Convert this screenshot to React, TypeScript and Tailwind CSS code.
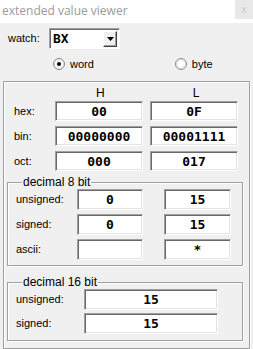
const label = "font-['Liberation_Sans',Arial,sans-serif] text-[11px] text-black leading-none"
const field =
  "bg-white border border-t-[#a0a0a0] border-l-[#a0a0a0] border-r-white border-b-white shadow-[inset_1px_1px_0_#696969,inset_-1px_-1px_0_#e3e3e3] flex items-center justify-center font-['DejaVu_Sans_Mono',monospace] font-bold text-[13px] leading-none text-black"
const group =
  "relative border border-[#a0a0a0] shadow-[inset_1px_1px_0_#ffffff,1px_1px_0_#ffffff]"

function Radio({ checked }: { checked?: boolean }) {
  return (
    <svg width="12" height="12" viewBox="0 0 12 12">
      <circle cx="6" cy="6" r="5.5" fill="#fff" stroke="#8a8a8a" />
      <circle cx="6" cy="6" r="4.5" fill="#fff" stroke="#d4d4d4" />
      {checked && <circle cx="6" cy="6" r="2" fill="#000" />}
    </svg>
  )
}

function GroupTitle({ text }: { text: string }) {
  return (
    <span className={`${label} absolute left-[14px] -top-[7px] bg-[#f0f0f0] px-[1px] text-[12px]`}>
      {text}
    </span>
  )
}

export default function App() {
  return (
    <div className="w-[253px] h-[349px] bg-[#f0f0f0] flex flex-col overflow-hidden">
      {/* title bar */}
      <div className="h-[23px] bg-white flex items-start justify-between shrink-0">
        <span className="pl-[2px] pt-[3px] font-['Open_Sans','Noto_Sans',sans-serif] text-[12px] leading-[16px] text-[#9a9a9a]">
          extended value viewer
        </span>
        <div className="w-[18px] h-[19px] bg-[#e8e8e8] flex items-center justify-center font-['Liberation_Sans',sans-serif] text-[10px] text-[#c8c8c8]">
          x
        </div>
      </div>

      {/* watch */}
      <div className="flex items-center h-[21px] mt-[5px] pl-[8px]">
        <span className={`${label} w-[41px]`}>watch:</span>
        <div className="w-[71px] h-[21px] bg-white border border-t-[#a0a0a0] border-l-[#a0a0a0] border-r-white border-b-white shadow-[inset_1px_1px_0_#696969] flex items-center justify-between pl-[3px] pr-[2px]">
          <span className="font-['DejaVu_Sans_Mono',monospace] font-bold text-[13px] leading-none">BX</span>
          <div className="w-[14px] h-[16px] bg-[#f0f0f0] border border-t-white border-l-white border-r-[#404040] border-b-[#404040] shadow-[inset_-1px_-1px_0_#a0a0a0] flex items-center justify-center">
            <svg width="7" height="4" viewBox="0 0 7 4">
              <path d="M0 0h7L3.5 4z" fill="#000" />
            </svg>
          </div>
        </div>
      </div>

      {/* radio */}
      <div className="flex items-center h-[12px] mt-[9px]">
        <div className="flex items-center gap-[5px] ml-[53px]">
          <Radio checked />
          <span className={label}>word</span>
        </div>
        <div className="flex items-center gap-[5px] ml-[81px]">
          <Radio />
          <span className={label}>byte</span>
        </div>
      </div>

      {/* outer group */}
      <div className={`${group} ml-[3px] w-[247px] h-[268px] mt-[11px] flex flex-col`}>
        <div className="flex h-[19px] items-center pt-[2px]">
          <span className={`${label} text-[12px] ml-[92px]`}>H</span>
          <span className={`${label} text-[12px] ml-[88px]`}>L</span>
        </div>
        <div className="flex flex-col gap-[5px]">
          {[
            ["hex:", "00", "0F"],
            ["bin:", "00000000", "00001111"],
            ["oct:", "000", "017"],
          ].map(([l, h, lo]) => (
            <div key={l} className="flex items-center pl-[10px]">
              <span className={`${label} w-[41px]`}>{l}</span>
              <div className={`${field} w-[88px] h-[20px]`}>{h}</div>
              <div className={`${field} w-[88px] h-[20px] ml-[7px]`}>{lo}</div>
            </div>
          ))}
        </div>

        {/* decimal 8 bit */}
        <div className={`${group} ml-[3px] w-[236px] h-[84px] mt-[11px] pt-[6px]`}>
          <GroupTitle text="decimal 8 bit" />
          <div className="flex flex-col gap-[4px]">
            {[
              ["unsigned:", "0", "15"],
              ["signed:", "0", "15"],
              ["ascii:", "", "*"],
            ].map(([l, h, lo]) => (
              <div key={l} className="flex items-center pl-[8px]">
                <span className={`${label} w-[61px]`}>{l}</span>
                <div className={`${field} w-[66px] h-[21px]`}>{h}</div>
                <div className={`${field} w-[67px] h-[21px] ml-[21px]`}>{lo}</div>
              </div>
            ))}
          </div>
        </div>

        {/* decimal 16 bit */}
        <div className={`${group} ml-[3px] w-[236px] h-[59px] mt-[16px] pt-[6px]`}>
          <GroupTitle text="decimal 16 bit" />
          <div className="flex flex-col gap-[3px]">
            {[
              ["unsigned:", "15"],
              ["signed:", "15"],
            ].map(([l, v]) => (
              <div key={l} className="flex items-center pl-[8px]">
                <span className={`${label} w-[68px]`}>{l}</span>
                <div className={`${field} w-[134px] h-[21px]`}>{v}</div>
              </div>
            ))}
          </div>
        </div>
      </div>
    </div>
  )
}
